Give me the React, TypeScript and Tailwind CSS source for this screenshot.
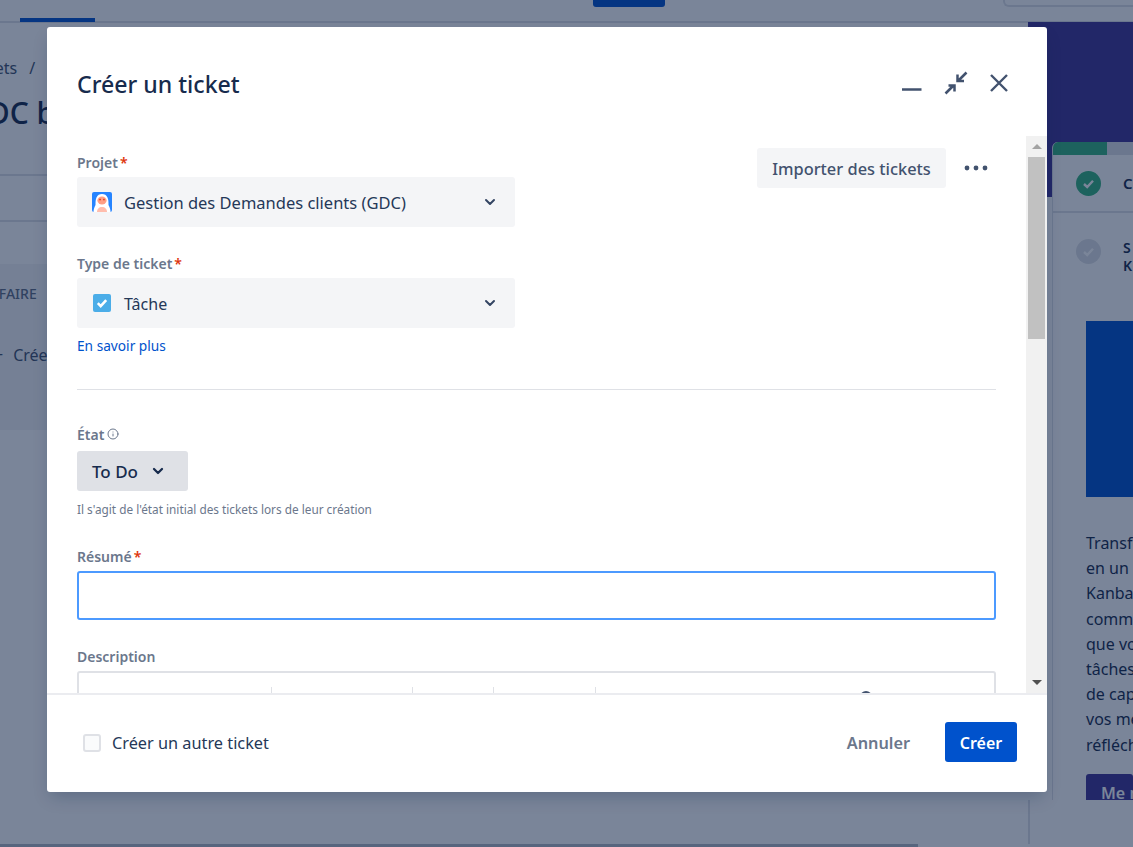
import { ChevronDown, Info } from 'lucide-react'

const fontStack = "font-['Noto_Sans','Open_Sans',sans-serif]"

function Required(): React.ReactNode {
  return <span className="ml-[2px] text-[#de350b]">*</span>
}

function FieldLabel({ text, required }: { text: string; required?: boolean }): React.ReactNode {
  return (
    <label className="block h-[20px] text-[14px] leading-[20px] font-semibold text-[#6b778c]">
      {text}
      {required && <Required />}
    </label>
  )
}

function ProjectAvatar(): React.ReactNode {
  return (
    <svg width="20" height="20" viewBox="0 0 20 20" aria-hidden="true">
      <rect width="20" height="20" rx="2" fill="#2684ff" />
      <path d="M1.5 20c0-3 1-5 2-7 0-3 0-5 1-7.500 1-2.500 3-3.500 5.500-3.500s4.500 1 5.500 3.500c1 2.500 1 4.500 1 7.500 1 2 2 4 2 7z" fill="#ffffff" />
      <ellipse cx="10" cy="8.500" rx="4.600" ry="4" fill="#ff9e85" />
      <path d="M5 20c0-3 2-5 5-5s5 2 5 5z" fill="#ffbdad" />
      <rect x="7.300" y="6.800" width="1.500" height="1.500" fill="#de350b" />
      <rect x="11.200" y="6.800" width="1.500" height="1.500" fill="#de350b" />
    </svg>
  )
}

function TaskIcon(): React.ReactNode {
  return (
    <svg width="18" height="18" viewBox="0 0 18 18" className="ml-[1px]" aria-hidden="true">
      <rect width="18" height="18" rx="2" fill="#4bade8" />
      <path d="M4.8 9.2l2.9 2.9L13.2 6.2" fill="none" stroke="#ffffff" strokeWidth="2.6" />
    </svg>
  )
}

function SelectBox({
  icon,
  text,
  textClass,
}: {
  icon: React.ReactNode
  text: string
  textClass: string
}): React.ReactNode {
  return (
    <div className="mt-[4px] flex h-[50px] w-[438px] items-center rounded-[3px] bg-[#f4f5f7] pr-[17px] pl-[15px]">
      <span className="flex w-[32px] items-center">{icon}</span>
      <span className={textClass}>{text}</span>
      <ChevronDown className="h-[16px] w-[16px] text-[#344563]" strokeWidth={3} aria-hidden="true" />
    </div>
  )
}

function CheckCircle({ muted }: { muted?: boolean }): React.ReactNode {
  return (
    <svg width="25" height="25" viewBox="0 0 25 25" className="shrink-0" aria-hidden="true">
      <circle cx="12.5" cy="12.5" r="12.5" fill={muted ? '#dfe1e6' : '#36b37e'} />
      <path d="M8 13l3.2 3L17 9.8" fill="none" stroke="#ffffff" strokeWidth="2.4" />
    </svg>
  )
}

function BackgroundPage(): React.ReactNode {
  return (
    <div className={`flex h-[847px] w-[1133px] flex-col overflow-hidden bg-white ${fontStack}`}>
      <div className="flex h-[23px] shrink-0 border-b-2 border-[#dfe1e6]">
        <div className="mt-[18px] ml-[20px] h-[4px] w-[75px] bg-[#0052cc]" />
        <div className="ml-[498px] h-[7px] w-[72px] rounded-b-[3px] bg-[#0052cc]" />
        <div className="ml-[338px] h-[7px] flex-1 rounded-bl-[6px] border-b-2 border-l-2 border-[#dfe1e6]" />
      </div>
      <div className="flex min-h-0 flex-1">
        <div className="w-[1028px] shrink-0 overflow-hidden">
          <div className="mt-[33px] -ml-[35px] text-[16px] whitespace-nowrap text-[#42526e]">
            Projets<span className="ml-[12px]">/</span>
          </div>
          <div className="mt-[10px] -ml-[34px] text-[30px] font-medium whitespace-nowrap text-[#172b4d]">GDC board</div>
          <div className="mt-[39px] h-[48px] border-y-2 border-[#dfe1e6]" />
          <div className="mt-[42px] h-[166px] w-[47px] overflow-hidden bg-[#f4f5f7]">
            <div className="mt-[19px] -ml-[14px] text-[14px] font-medium whitespace-nowrap text-[#5e6c84]">À FAIRE</div>
            <div className="mt-[39px] -ml-[6px] text-[16px] whitespace-nowrap text-[#42526e]">
              +<span className="ml-[10px]">Créer</span>
            </div>
          </div>
        </div>
        <div className="-mt-[1px] flex w-[105px] shrink-0 flex-col">
          <div className="h-[175px] shrink-0 bg-[#403294]" />
          <div className="-mt-[55px] ml-[24px] h-[658px] shrink-0 overflow-hidden rounded-tl-[6px] border-l border-[#dfe1e6] bg-white">
            <div className="h-[13px] bg-[#dfe1e6]">
              <div className="h-full w-[54px] bg-[#36b37e]" />
            </div>
            <div className="flex h-[58px] items-center gap-[22px] border-b-2 border-[#dfe1e6] pl-[23px]">
              <CheckCircle />
              <span className="text-[15px] font-semibold whitespace-nowrap text-[#172b4d]">Créer</span>
            </div>
            <div className="flex gap-[22px] pt-[26px] pl-[23px]">
              <CheckCircle muted />
              <div className="text-[14px] leading-[18px] font-semibold text-[#172b4d]">
                S
                <br />K
              </div>
            </div>
            <div className="mt-[46px] ml-[33px] h-[176px] bg-[#0052cc]" />
            <div className="mt-[34px] ml-[33px] w-[200px] text-[16px] leading-[25.2px] whitespace-nowrap text-[#172b4d]">
              <p>Transformez</p>
              <p>en un</p>
              <p>Kanban</p>
              <p>comment</p>
              <p>que vos</p>
              <p>tâches</p>
              <p>de capacité</p>
              <p>vos membres</p>
              <p>réfléchir</p>
            </div>
            <div className="mt-[16px] ml-[33px] flex h-[40px] items-start rounded-[3px] bg-[#403294] px-[15px] pt-[7px] text-[16px] font-semibold whitespace-nowrap text-white">
              Me montrer
            </div>
          </div>
          <div className="min-h-0 flex-1 border-l-2 border-[#dfe1e6]" />
        </div>
      </div>
      <div className="h-[3px] w-[918px] shrink-0 bg-[#b3bac5]" />
    </div>
  )
}

function HeaderIcons(): React.ReactNode {
  return (
    <div className="mt-[4px] flex items-center gap-[21px] text-[#42526e]">
      <svg width="22" height="22" viewBox="0 0 22 22" aria-hidden="true">
        <path d="M1 17.5h19.5" stroke="currentColor" strokeWidth="2.4" fill="none" />
      </svg>
      <svg width="24" height="24" viewBox="0 0 24 24" aria-hidden="true" fill="none" stroke="currentColor" strokeWidth="2.5">
        <path d="M1.5 22.5l8-8M4.5 14.5h6v6" />
        <path d="M22.5 1.5l-8 8M13.5 3.5v6.5h6.5" />
      </svg>
      <svg width="20" height="20" viewBox="0 0 20 20" aria-hidden="true" fill="none" stroke="currentColor" strokeWidth="2.4">
        <path d="M2 2l16 16M18 2L2 18" />
      </svg>
    </div>
  )
}

function FakeScrollbar(): React.ReactNode {
  return (
    <div className="flex w-[21px] shrink-0 flex-col items-center bg-[#f1f1f1]">
      <div className="flex h-[21px] items-center justify-center">
        <div className="h-0 w-0 border-x-[5px] border-b-[5px] border-x-transparent border-b-[#a3a3a3]" />
      </div>
      <div className="h-[182px] w-[17px] bg-[#c1c1c1]" />
      <div className="flex-1" />
      <div className="flex h-[21px] items-center justify-center">
        <div className="h-0 w-0 border-x-[5px] border-t-[5px] border-x-transparent border-t-[#505050]" />
      </div>
    </div>
  )
}

function CreateTicketModal(): React.ReactNode {
  return (
    <div
      role="dialog"
      className={`absolute top-[27px] left-[47px] flex h-[765px] w-[1000px] flex-col overflow-hidden rounded-[3px] bg-white shadow-[0_8px_16px_-4px_rgba(9,30,66,0.25)] ${fontStack}`}
    >
      <div className="flex h-[109px] shrink-0 items-start justify-between pt-[40px] pr-[38px] pl-[30px]">
        <h1 className="text-[23.1px] leading-[34px] font-medium text-[#172b4d]">Créer un ticket</h1>
        <HeaderIcons />
      </div>

      <div className="flex min-h-0 flex-1">
        <div className="relative min-w-0 flex-1 overflow-hidden pt-[17px] pr-[30px] pl-[30px]">
          <div className="absolute top-[12px] right-[38px] flex items-center gap-[18px]">
            <button
              type="button"
              className="h-[40px] w-[189px] rounded-[3px] bg-[#f4f5f7] pt-[2px] text-[16.4px] font-medium text-[#42526e]"
            >
              Importer des tickets
            </button>
            <svg width="24" height="6" viewBox="0 0 24 6" fill="#42526e" aria-hidden="true">
              <circle cx="3" cy="3" r="2.4" />
              <circle cx="12" cy="3" r="2.4" />
              <circle cx="21" cy="3" r="2.4" />
            </svg>
          </div>

          <FieldLabel text="Projet" required />
          <SelectBox
            icon={<ProjectAvatar />}
            text="Gestion des Demandes clients (GDC)"
            textClass="flex-1 pt-[2px] text-[16.5px] text-[#253858]"
          />

          <div className="mt-[27px]">
            <FieldLabel text="Type de ticket" required />
          </div>
          <SelectBox icon={<TaskIcon />} text="Tâche" textClass="flex-1 pt-[2px] text-[16px] text-[#253858]" />
          <a className="mt-[8px] block text-[13.7px] leading-[20px] text-[#0052cc]">En savoir plus</a>

          <hr className="mt-[33px] border-t border-[#dfe1e6]" />

          <div className="mt-[34px] flex h-[20px] items-center gap-[3px] text-[14px] font-semibold text-[#6b778c]">
            État
            <Info className="h-[12px] w-[12px]" aria-hidden="true" />
          </div>
          <div className="mt-[7px] flex h-[40px] w-[111px] items-center gap-[12px] rounded-[3px] bg-[#dfe1e6] pl-[15px]">
            <span className="pt-[2px] text-[17px] font-medium text-[#172b4d]">To Do</span>
            <ChevronDown className="h-[16px] w-[16px] text-[#172b4d]" strokeWidth={3.4} aria-hidden="true" />
          </div>
          <p className="mt-[9px] text-[11.8px] leading-[18px] text-[#6b778c]">
            Il s'agit de l'état initial des tickets lors de leur création
          </p>

          <div className="mt-[29px]">
            <FieldLabel text="Résumé" required />
          </div>
          <input
            type="text"
            aria-label="Résumé"
            className="mt-[4px] block h-[49px] w-full rounded-[3px] border-2 border-[#4c9aff] bg-white outline-none"
          />

          <div className="mt-[27px]">
            <FieldLabel text="Description" />
          </div>
          <div className="mt-[4px] flex h-[60px] rounded-t-[3px] border-2 border-[#dfe1e6] pt-[14px]">
            <div className="h-[10px] w-[193px] border-r border-[#dfe1e6]" />
            <div className="h-[10px] w-[141px] border-r border-[#dfe1e6]" />
            <div className="h-[10px] w-[81px] border-r border-[#dfe1e6]" />
            <div className="h-[10px] w-[102px] border-r border-[#dfe1e6]" />
            <div className="mt-[4px] ml-[264px] h-[12px] w-[12px] rounded-full border-2 border-[#42526e]" />
          </div>
        </div>
        <FakeScrollbar />
      </div>

      <div className="flex h-[99px] shrink-0 items-center justify-between border-t-2 border-[#ebecf0] pr-[30px] pb-[4px] pl-[36px]">
        <label className="flex items-center gap-[11px] pt-[4px] text-[16.3px] text-[#253858]">
          <span className="-mt-[2px] h-[18px] w-[18px] rounded-[3px] border-2 border-[#dfe1e6] bg-[#fafbfc]" />
          Créer un autre ticket
        </label>
        <div className="flex items-center gap-[35px]">
          <button type="button" className="pt-[3px] text-[16.3px] font-semibold text-[#6b778c]">
            Annuler
          </button>
          <button
            type="button"
            className="h-[40px] w-[72px] rounded-[3px] bg-[#0052cc] pt-[2px] text-[16px] font-semibold text-white"
          >
            Créer
          </button>
        </div>
      </div>
    </div>
  )
}

export default function App(): React.ReactNode {
  return (
    <div className="relative h-[847px] w-[1133px] overflow-hidden">
      <BackgroundPage />
      <div className="absolute inset-0 bg-[#091e428a]" />
      <CreateTicketModal />
    </div>
  )
}
